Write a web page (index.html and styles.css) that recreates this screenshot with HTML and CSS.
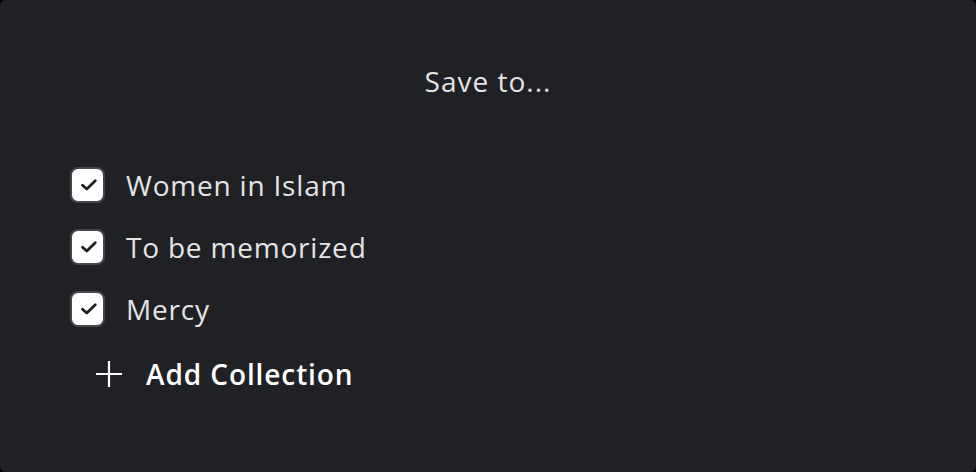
FILE: index.html
```html
<!DOCTYPE html>
<html>
<head>
<meta charset="utf-8">
<link rel="stylesheet" href="styles.css">
</head>
<body>
<div class="dialog">
  <h1 class="title">Save to...</h1>
  <ul class="list">
    <li class="item">
      <span class="check"><svg viewBox="0 0 18 14" width="18" height="14"><path d="M2.5 7.2 L6.8 11 L15.3 2.8" fill="none" stroke="#1f2024" stroke-width="2.8" stroke-linecap="round" stroke-linejoin="round"/></svg></span>
      <span class="label">Women in Islam</span>
    </li>
    <li class="item">
      <span class="check"><svg viewBox="0 0 18 14" width="18" height="14"><path d="M2.5 7.2 L6.8 11 L15.3 2.8" fill="none" stroke="#1f2024" stroke-width="2.8" stroke-linecap="round" stroke-linejoin="round"/></svg></span>
      <span class="label">To be memorized</span>
    </li>
    <li class="item">
      <span class="check"><svg viewBox="0 0 18 14" width="18" height="14"><path d="M2.5 7.2 L6.8 11 L15.3 2.8" fill="none" stroke="#1f2024" stroke-width="2.8" stroke-linecap="round" stroke-linejoin="round"/></svg></span>
      <span class="label">Mercy</span>
    </li>
  </ul>
  <button class="add">
    <svg class="plus" viewBox="0 0 28 28" width="28" height="28"><path d="M14 1 V27 M1 14 H27" stroke="#ffffff" stroke-width="2.2" fill="none"/></svg>
    <span>Add Collection</span>
  </button>
</div>
</body>
</html>
```
FILE: styles.css
```css
html, body {
  margin: 0;
  padding: 0;
  background: #000;
}
body {
  width: 976px;
  height: 472px;
  font-family: "Open Sans", Lato, sans-serif;
}
.dialog {
  box-sizing: border-box;
  width: 976px;
  height: 472px;
  background: #202125;
  border-radius: 6px;
  padding: 61px 0 0 70px;
}
.title {
  margin: 0 0 0 -70px;
  text-align: center;
  font-weight: 400;
  font-size: 28px;
  letter-spacing: 1px;
  line-height: 40px;
  color: #e4e4e6;
}
.list {
  list-style: none;
  margin: 66px 0 0 0;
  padding: 0;
  display: flex;
  flex-direction: column;
  gap: 26px;
}
.item {
  display: flex;
  align-items: center;
  gap: 21px;
  height: 36px;
}
.check {
  box-sizing: border-box;
  width: 35px;
  height: 36px;
  border: 2px solid #45464b;
  border-radius: 8px;
  background: #ffffff;
  display: flex;
  align-items: center;
  justify-content: center;
  padding-left: 2px;
}
.label {
  font-size: 28px;
  letter-spacing: 0.8px;
  color: #e4e4e6;
  line-height: 36px;
}
.add {
  margin: 29px 0 0 25px;
  padding: 0;
  border: none;
  background: none;
  display: flex;
  align-items: center;
  gap: 23px;
  font-family: inherit;
  font-size: 28px;
  letter-spacing: 0.9px;
  font-weight: 600;
  color: #ffffff;
  height: 36px;
  cursor: pointer;
}
.plus {
  display: block;
}
```
